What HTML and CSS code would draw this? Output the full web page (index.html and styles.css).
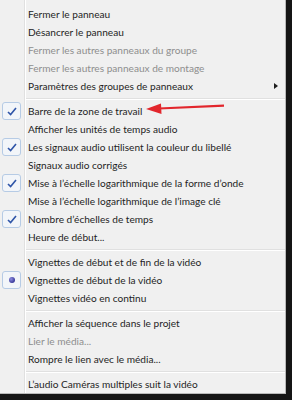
FILE: index.html
```html
<!DOCTYPE html>
<html>
<head>
  <title>Menu du panneau</title>
  <link rel="stylesheet" href="styles.css">
</head>
<body>

<div class="menu">
  <div class="item"><span class="mark"></span><span class="label">Fermer le panneau</span></div>
  <div class="item"><span class="mark"></span><span class="label">Désancrer le panneau</span></div>
  <div class="item off"><span class="mark"></span><span class="label">Fermer les autres panneaux du groupe</span></div>
  <div class="item off"><span class="mark"></span><span class="label">Fermer les autres panneaux de montage</span></div>
  <div class="item"><span class="mark"></span><span class="label">Paramètres des groupes de panneaux</span><span class="sub"></span></div>
  <div class="sep"></div>

  <div class="item"><span class="mark check"><svg width="10" height="9" viewBox="0 0 10 9"><path d="M1 5 L3.6 7.6 L9 1" fill="none" stroke="#2f55a8" stroke-width="1.6"/></svg></span><span class="label">Barre de la zone de travail</span></div>
  <div class="item"><span class="mark"></span><span class="label">Afficher les unités de temps audio</span></div>
  <div class="item"><span class="mark check"><svg width="10" height="9" viewBox="0 0 10 9"><path d="M1 5 L3.6 7.6 L9 1" fill="none" stroke="#2f55a8" stroke-width="1.6"/></svg></span><span class="label">Les signaux audio utilisent la couleur du libellé</span></div>
  <div class="item"><span class="mark"></span><span class="label">Signaux audio corrigés</span></div>
  <div class="item"><span class="mark check"><svg width="10" height="9" viewBox="0 0 10 9"><path d="M1 5 L3.6 7.6 L9 1" fill="none" stroke="#2f55a8" stroke-width="1.6"/></svg></span><span class="label">Mise à l’échelle logarithmique de la forme d’onde</span></div>
  <div class="item"><span class="mark"></span><span class="label">Mise à l’échelle logarithmique de l’image clé</span></div>
  <div class="item"><span class="mark check"><svg width="10" height="9" viewBox="0 0 10 9"><path d="M1 5 L3.6 7.6 L9 1" fill="none" stroke="#2f55a8" stroke-width="1.6"/></svg></span><span class="label">Nombre d’échelles de temps</span></div>
  <div class="item"><span class="mark"></span><span class="label">Heure de début...</span></div>
  <div class="sep"></div>

  <div class="item"><span class="mark"></span><span class="label">Vignettes de début et de fin de la vidéo</span></div>
  <div class="item"><span class="mark check"><span class="dot"></span></span><span class="label">Vignettes de début de la vidéo</span></div>
  <div class="item"><span class="mark"></span><span class="label">Vignettes vidéo en continu</span></div>
  <div class="sep"></div>

  <div class="item"><span class="mark"></span><span class="label">Afficher la séquence dans le projet</span></div>
  <div class="item off"><span class="mark"></span><span class="label">Lier le média...</span></div>
  <div class="item"><span class="mark"></span><span class="label">Rompre le lien avec le média...</span></div>
  <div class="sep"></div>

  <div class="item"><span class="mark"></span><span class="label">L’audio Caméras multiples suit la vidéo</span></div>

  <svg class="pointer" width="82" height="12" viewBox="0 0 82 12">
    <path d="M13 6.5 L78 3.6" stroke="#e2262c" stroke-width="2.2" fill="none"/>
    <path d="M0 7 L15 1.5 L15.5 12 Z" fill="#e2262c"/>
  </svg>
</div>

</body>
</html>
```

FILE: styles.css
```css
body {
  margin: 0;
  background: #151515;
  font-family: Lato, "Noto Sans", sans-serif;
  font-size: 10.1px;
  color: #1e1e1e;
}

.menu {
  position: relative;
  width: 286px;
  height: 394px;
  box-sizing: border-box;
  padding-top: 5px;
  border-right: 1px solid #b9b9b9;
  border-bottom: 1px solid #b9b9b9;
  background: linear-gradient(to right, #f0f0f0 0, #f0f0f0 24px, #e0e0e0 24px, #e0e0e0 25px, #ffffff 25px, #ffffff 26px, #f0f0f0 26px);
  display: flex;
  flex-direction: column;
}

.item {
  display: flex;
  align-items: center;
  height: 18px;
}

.item.off {
  color: #8e8e8e;
}

.mark {
  width: 24px;
  height: 18px;
  display: flex;
  align-items: center;
  justify-content: center;
  flex: none;
}

.mark.check {
  width: 19px;
  height: 18px;
  margin: 0 3px 0 2px;
  box-sizing: border-box;
  border: 1px solid #b6cbe5;
  border-radius: 3px;
  background: #f2f5f9;
}

.dot {
  width: 6px;
  height: 6px;
  border-radius: 50%;
  background: radial-gradient(circle at 35% 35%, #8c8ce0 0, #3a3a9a 70%);
}

.label {
  padding-left: 4px;
  white-space: nowrap;
  flex: 1;
}

.sub {
  width: 0;
  height: 0;
  margin-right: 7px;
  border-left: 4px solid #1e1e1e;
  border-top: 3.5px solid transparent;
  border-bottom: 3.5px solid transparent;
}

.sep {
  height: 8px;
  margin-left: 26px;
  display: flex;
  flex-direction: column;
  justify-content: center;
}

.sep::before {
  content: "";
  display: block;
  height: 1px;
  background: #e0e0e0;
  border-bottom: 1px solid #ffffff;
}

.pointer {
  position: absolute;
  left: 146px;
  top: 102px;
}
```
